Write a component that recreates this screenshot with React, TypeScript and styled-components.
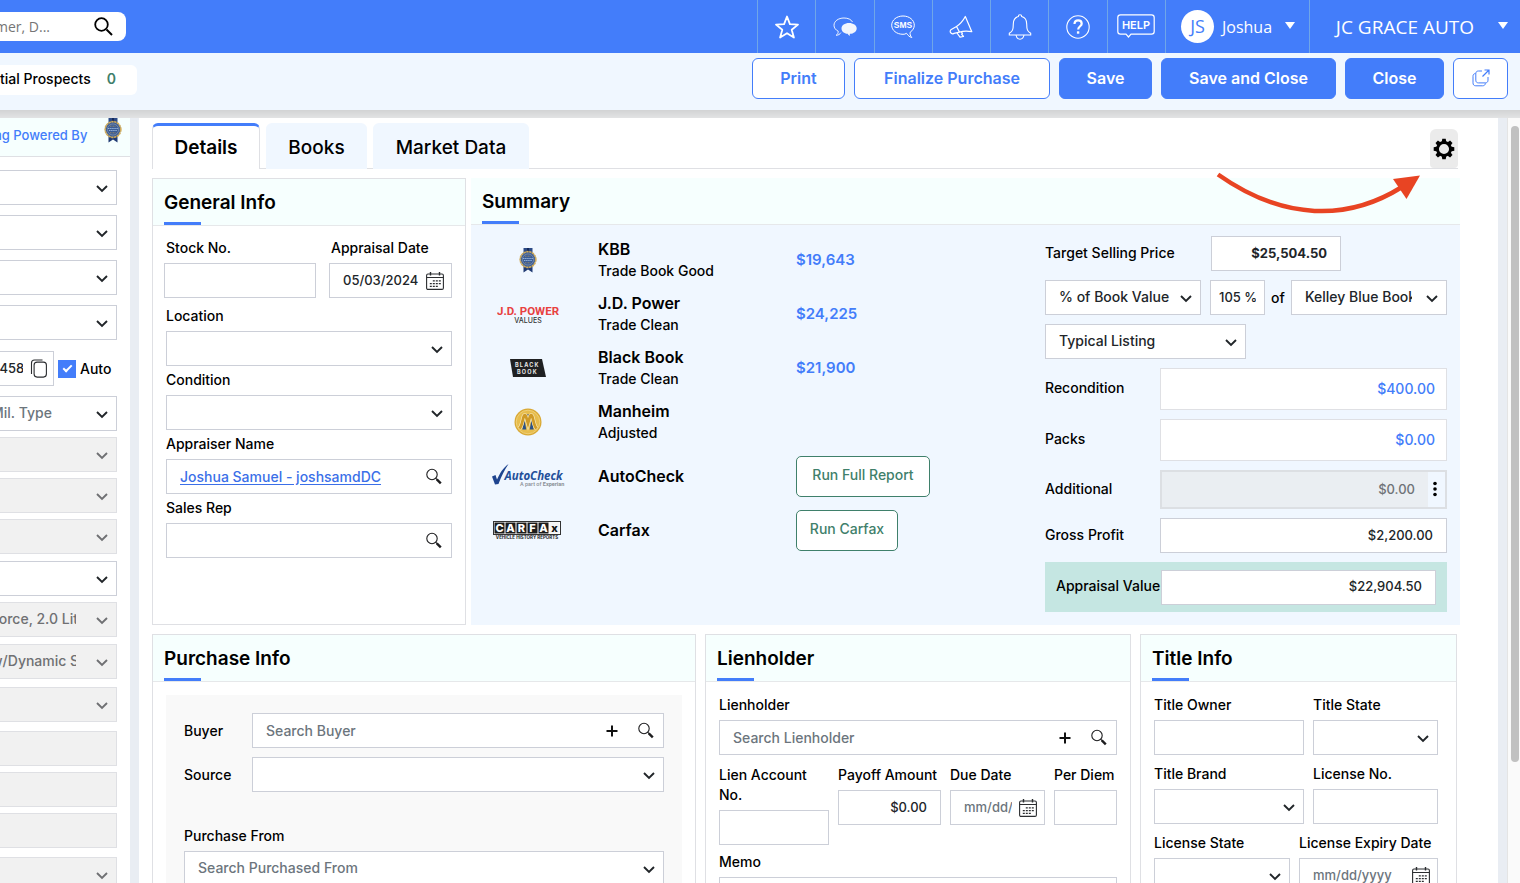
import React, { useId } from "react";
import styled, { createGlobalStyle, css } from "styled-components";

const c = {
  blue: "#437dfa",
  pale: "#f0f7ff",
  mint: "#f6fffe",
  line: "#dfe0e4",
  field: "#cccfd8",
  ink: "#212529",
  gutter: "#e9edf3",
  green: "#3f806b",
  muted: "#6c757d",
};

const ui = `Inter, "Liberation Sans", sans-serif`;
const nav = `"Open Sans", "Noto Sans", sans-serif`;

const GlobalStyle = createGlobalStyle`
  *, *::before, *::after { box-sizing: border-box; }
  body { margin: 0; background: ${c.gutter}; color: #000; font: 500 14px/20px ${ui}; }
  button, input, select { font: inherit; margin: 0; }
  svg { display: block; flex: none; }
`;

/* ---------- shell ---------- */

const Shell = styled.div`
  display: flex;
  flex-direction: column;
  height: 100vh;
  overflow: hidden;
`;

const TopBar = styled.header`
  display: flex;
  justify-content: space-between;
  align-items: center;
  height: 53px;
  flex: none;
  background: ${c.blue};
  color: #fff;
  font-family: ${nav};
  font-weight: 400;
`;

const SearchBox = styled.form`
  display: flex;
  align-items: center;
  width: 131px;
  height: 29px;
  margin-left: -5px;
  padding-right: 13px;
  background: #fff;
  border-radius: 0 8px 8px 0;
  overflow: hidden;
`;

const SearchInput = styled.input`
  flex: 1;
  min-width: 0;
  border: 0;
  padding: 0;
  background: none;
  font-size: 14px;
  &::placeholder { color: #757575; opacity: 1; }
`;

const BareButton = styled.button`
  display: flex;
  align-items: center;
  justify-content: center;
  border: 0;
  padding: 0;
  background: none;
  color: inherit;
  cursor: pointer;
`;

const TopRight = styled.nav`
  display: flex;
  height: 100%;
`;

const IconStrip = styled.div`
  display: grid;
  grid-template-columns: repeat(7, 1fr);
  width: 408px;
`;

const NavButton = styled(BareButton)`
  border-left: 1px solid #6fa6e8;
`;

const UserButton = styled(NavButton)`
  width: 144px;
  justify-content: space-between;
  padding: 0 14px 0 15px;
  font-size: 16px;
`;

const UserName = styled.span`
  display: flex;
  align-items: center;
  gap: 8px;
`;

const Avatar = styled.span`
  width: 33px;
  height: 33px;
  border-radius: 50%;
  background: #fff;
  color: ${c.blue};
  font-size: 18px;
  line-height: 33px;
`;

const DealerButton = styled(NavButton)`
  width: 211px;
  justify-content: flex-end;
  gap: 24px;
  padding-right: 12px;
  font-size: 19px;
`;

const Caret = styled.span`
  margin-bottom: 3px;
  border: 5px solid transparent;
  border-top: 7px solid #fff;
  border-bottom: 0;
`;

const ActionBar = styled.div`
  display: flex;
  justify-content: space-between;
  align-items: flex-start;
  height: 57px;
  flex: none;
  padding: 5px 12px 0 0;
  background: ${c.pale};
`;

const ProspectTab = styled.a`
  display: flex;
  align-items: center;
  gap: 16px;
  width: 137px;
  height: 30px;
  margin-top: 7px;
  padding-bottom: 2px;
  background: #fff;
  border-radius: 0 6px 6px 0;
  color: #000;
  white-space: nowrap;
  text-decoration: none;
`;

const ProspectCount = styled.span`
  color: ${c.green};
  font-weight: 600;
`;

const Actions = styled.div`
  display: flex;
  gap: 9px;
`;

const ActionButton = styled.button<{ $w: number; $solid?: boolean }>`
  display: flex;
  align-items: center;
  justify-content: center;
  width: ${(p) => p.$w}px;
  height: 41px;
  padding: 0 0 2px;
  border: 1px solid ${c.blue};
  border-radius: 6px;
  background: ${(p) => (p.$solid ? c.blue : "#fff")};
  color: ${(p) => (p.$solid ? "#fff" : c.blue)};
  font-size: 16px;
  font-weight: 600;
  white-space: nowrap;
  cursor: pointer;
`;

const BarShadow = styled.div`
  height: 8px;
  flex: none;
  background: linear-gradient(#d2d3d4, #e2e3e4);
`;

const Workspace = styled.div`
  display: flex;
  flex: 1;
  min-height: 0;
`;

/* ---------- form parts ---------- */

const Control = styled.span<{ $h?: number; $w?: number; $tone?: "off" | "soft" }>`
  display: flex;
  align-items: center;
  position: relative;
  width: ${(p) => (p.$w ? `${p.$w}px` : "100%")};
  height: ${(p) => p.$h ?? 35}px;
  flex: ${(p) => (p.$w ? "none" : "0 1 auto")};
  min-width: 0;
  border: 1px solid ${(p) => (p.$tone ? c.line : c.field)};
  background: ${(p) => (p.$tone === "off" ? "#f1f1f1" : "#fff")};
  color: ${(p) => (p.$tone === "off" ? "#6f7073" : c.ink)};
`;

const inner = css`
  flex: 1;
  min-width: 0;
  width: 100%;
  height: 100%;
  border: 0;
  border-radius: 0;
  background: none;
  color: inherit;
  outline-offset: -2px;
`;

const TextInput = styled.input<{ $pad?: string; $right?: boolean; $bold?: boolean; $small?: boolean }>`
  ${inner}
  padding: ${(p) => p.$pad ?? "0 13px"};
  padding-bottom: ${(p) => (p.$small ? 2 : 0)}px;
  text-align: ${(p) => (p.$right ? "right" : "left")};
  font-size: ${(p) => (p.$small ? 13 : 14)}px;
  font-weight: ${(p) => (p.$bold ? 700 : 500)};
  &::placeholder { color: ${c.muted}; opacity: 1; }
`;

const NativeSelect = styled.select<{ $pad?: string; $muted?: boolean }>`
  ${inner}
  appearance: none;
  opacity: 1;
  padding: ${(p) => p.$pad ?? "0 34px 2px 13px"};
  ${(p) => p.$muted && `color: ${c.muted};`}
  &:disabled { color: inherit; opacity: 1; }
`;

const SelectMark = styled.svg`
  position: absolute;
  right: 8px;
  top: calc(50% - 3px);
  pointer-events: none;
`;

const FieldBox = styled.div`
  display: flex;
  flex-direction: column;
  gap: 5px;
  min-width: 0;
`;

const Label = styled.label<{ $wrap?: boolean; $inset?: boolean }>`
  white-space: ${(p) => (p.$wrap ? "normal" : "nowrap")};
  padding-left: ${(p) => (p.$inset ? 2 : 0)}px;
`;

const IconSlot = styled(BareButton)`
  flex: none;
  width: 34px;
  height: 100%;
  color: #111;
`;

const CalendarSlot = styled(IconSlot)`
  width: 32px;
`;

const CopySlot = styled(IconSlot)`
  width: 30px;
`;

type SelectProps = {
  id?: string;
  label?: string;
  value?: string;
  w?: number;
  pad?: string;
  off?: boolean;
  muted?: boolean;
};

function Select({ id, label, value = "", w, pad, off, muted }: SelectProps) {
  return (
    <Control $w={w} $tone={off ? "off" : undefined}>
      <NativeSelect id={id} aria-label={label} disabled={off} $pad={pad} $muted={muted}>
        <option>{value}</option>
      </NativeSelect>
      <SelectMark width="12" height="8" viewBox="0 0 12 8" fill="none" stroke="currentColor" strokeWidth="1.9">
        <path d="M1 1l5 5 5-5" />
      </SelectMark>
    </Control>
  );
}

function Field({ label, wrap, inset, children }: {
  label: string; wrap?: boolean; inset?: boolean; children: (id: string) => React.ReactNode;
}) {
  const id = useId();
  return (
    <FieldBox>
      <Label htmlFor={id} $wrap={wrap} $inset={inset}>{label}</Label>
      {children(id)}
    </FieldBox>
  );
}

/* ---------- icons ---------- */

const Magnifier = () => (
  <svg width="18" height="18" viewBox="0 0 18 18" fill="none" stroke="#1d1d1f">
    <circle cx="7" cy="6.500" r="5.200" strokeWidth="1.100" />
    <path d="M10.600 10.100l2 2" strokeWidth="1.200" />
    <path d="M11.800 11.300l4 4" strokeWidth="2.400" />
  </svg>
);

const Plus = () => (
  <svg width="12" height="12" viewBox="0 0 12 12" stroke="#111" strokeWidth="2">
    <path d="M6 .5v11M.5 6h11" />
  </svg>
);

const Calendar = () => (
  <svg width="18" height="18" viewBox="0 0 18 18" fill="none" stroke="#2b2d30">
    <rect x=".6" y="2" width="16.800" height="15.400" rx="1.400" strokeWidth="1.100" />
    <path d="M.6 5.500h16.800" strokeWidth="1" />
    <path d="M4.500 0v3.400M13.500 0v3.400" strokeWidth="1.400" />
    <path d="M6.800 8.800h8M3.800 11.600h11M3.800 14.400h8" strokeWidth="1.300" strokeDasharray="2 1" />
  </svg>
);

const Gear = () => (
  <svg width="22" height="22" viewBox="-11 -11 22 22">
    <circle r="6.500" fill="none" stroke="#000" strokeWidth="2.900" />
    {[0, 45, 90, 135, 180, 225, 270, 315].map((a) => (
      <path key={a} d="M-2.400-6.600L-1.700-10.300H1.700L2.400-6.600z" transform={`rotate(${a})`} />
    ))}
  </svg>
);

const KbbBadge = () => (
  <svg width="18" height="25" viewBox="0 0 18 25">
    <path d="M4.500 0h9v6h-9z" fill="#2c4a86" />
    <path d="M8 0h2v5H8z" fill="#14295a" />
    <path d="M4.500 16h9v8.500L9 21.500l-4.500 3z" fill="#1f3a73" />
    <circle cx="9" cy="11.500" r="7.800" fill="#3a5c96" stroke="#d0ab58" strokeWidth="1.700" strokeDasharray="2.400 .5" />
    <circle cx="9" cy="11.500" r="5.600" fill="none" stroke="#93a3b5" strokeWidth=".6" />
    <path d="M4 10.500h10M5 12.500h8" stroke="#9cbbe2" strokeWidth=".9" strokeDasharray="1.500 .6" />
    <path d="M6 8.200h6M6 14.800h6" stroke="#b99b58" strokeWidth=".7" strokeDasharray="1 .5" />
  </svg>
);

const JdPowerLogo = () => (
  <svg width="62" height="22" viewBox="0 0 62 22">
    <text x="31" y="11.500" textAnchor="middle" fontFamily="Roboto, sans-serif" fontWeight="700" fontSize="11.500" fill="#e8413f">J.D. POWER</text>
    <text x="31" y="20" textAnchor="middle" fontFamily="Inter, sans-serif" fontWeight="500" fontSize="7" fill="#333">VALUES</text>
  </svg>
);

const BlackBookLogo = () => (
  <svg width="36" height="18" viewBox="0 0 36 18">
    <path d="M0 0h32l4 18H3z" fill="#1f2022" />
    <g fontFamily="Inter, sans-serif" fontWeight="700" fontSize="5.500" fill="#e9e9e9">
      <text x="5" y="8" letterSpacing="1.200">BLACK</text>
      <text x="7" y="14.500" letterSpacing="1.200">BOOK</text>
    </g>
  </svg>
);

const ManheimLogo = () => (
  <svg width="28" height="28" viewBox="0 0 28 28">
    <circle cx="14" cy="14" r="13.500" fill="#d9a935" />
    <circle cx="14" cy="14" r="11.800" fill="#e7bd4d" stroke="#f3d684" strokeWidth=".8" />
    <path d="M10.500 12l-2.200 9.500h4zM17.500 12l2.200 9.500h-4zM11.500 6.500h5L14 14z" fill="#2c5288" />
    <path d="M5.500 20.500C8 18 8.500 12 9.800 8.200c.5-1.300 1.600-1.300 2.100 0L14 15.500l2.100-7.300c.5-1.300 1.600-1.300 2.100 0C19.500 12 20 18 22.500 20.500" fill="none" stroke="#f8ecc4" strokeWidth="4" />
    <path d="M5.500 20.500C8 18 8.500 12 9.800 8.200c.5-1.300 1.600-1.300 2.100 0L14 15.500l2.100-7.300c.5-1.300 1.600-1.300 2.100 0C19.500 12 20 18 22.500 20.500" fill="none" stroke="#cf9a26" strokeWidth="2.800" />
  </svg>
);

const AutoCheckLogo = () => (
  <svg width="73" height="24" viewBox="0 0 73 24">
    <path d="M0 12.500l3.500-1.500 1.500 4.500C8 9 11 4 16.500 0 12.500 6 9.500 12 6.500 20L3 20.500z" fill="#1e448f" />
    <text x="12.500" y="15.500" fontFamily='"Open Sans", sans-serif' fontStyle="italic" fontWeight="700" fontSize="11.500" fill="#24509a">AutoCheck</text>
    <text x="28" y="22" fontFamily="Roboto, sans-serif" fontSize="5.500" fill="#8a9096">A part of <tspan fontWeight="700">Experian</tspan></text>
  </svg>
);

const CarfaxLogo = () => (
  <svg width="70" height="19" viewBox="0 0 70 19">
    <rect x=".5" y=".5" width="67" height="13" fill="#fff" stroke="#333" />
    {["C", "A", "R", "F", "A", "x"].map((l, i) => (
      <g key={i}>
        <rect x={1.5 + i * 11} y="1.500" width="10" height="11" fill={i < 5 ? "#1d1d1d" : "#f4f4f4"} />
        <text x={6.5 + i * 11} y="11" textAnchor="middle" fontFamily="Inter, sans-serif" fontWeight="800" fontSize="11" fill={i < 5 ? "#fff" : "#111"}>{l}</text>
      </g>
    ))}
    <text x="34" y="18" textAnchor="middle" fontFamily="Inter, sans-serif" fontWeight="700" fontSize="4.500" fill="#222">VEHICLE HISTORY REPORTS</text>
  </svg>
);

const StarIcon = () => (
  <svg width="26" height="26" viewBox="0 0 26 26" fill="none" stroke="#fff" strokeWidth="1.800" strokeLinejoin="round">
    <path d="M13 2.500l2.900 7.600 8.100.5-6.300 5.100 2.200 7.900L13 19.200l-6.900 4.400 2.200-7.900L2 10.600l8.100-.5z" />
  </svg>
);

const ChatIcon = () => (
  <svg width="24" height="20" viewBox="0 0 24 20" fill="none">
    <path d="M19.500 5C18.300 2.500 15 1 11 1 5.300 1 1 4.200 1 8.300c0 2.500 1.600 4.600 4.200 5.900.1 1.800-.6 3-2 4.100 2.200-.1 3.700-1 4.700-2.700" stroke="#fff" strokeWidth="1" opacity=".9" />
    <path d="M16 6c-4.200 0-7.500 2.400-7.500 5.400 0 2.900 2.700 5.100 6.200 5.400.4 1 1.200 1.700 2.400 2-.4-.7-.4-1.300-.2-2 3.900-.2 6.800-2.500 6.800-5.400C23.700 8.400 20.200 6 16 6z" fill="#f1f5fd" />
  </svg>
);

const SmsIcon = () => (
  <svg width="24" height="24" viewBox="0 0 24 24">
    <path d="M15.500 18.300c1.500 2.300 3.200 3.700 5.300 4.200-1.500-1.700-2-3.300-1.600-5.300C21.700 15.500 23.300 13 23.300 10.200 23.300 5 18.300 1 12 1S.7 5 .7 10.200s5 9.100 11.300 9.100c1.300 0 2.500-.2 3.500-1z" fill="none" stroke="#fff" strokeWidth="1" />
    <text x="12" y="13" textAnchor="middle" fontFamily='"Liberation Sans", sans-serif' fontWeight="700" fontSize="8.500" fill="#fff">SMS</text>
  </svg>
);

const HornIcon = () => (
  <svg width="24" height="24" viewBox="0 0 24 24" fill="none" stroke="#fff" strokeWidth="1.200" strokeLinejoin="round">
    <path d="M16.300 1.500l6.500 15.200c-4.400-.9-8.500-.8-12.300.4L7.500 11.500c3.800-2.500 6.600-5.800 8.800-10zM7.500 11.500l-4.800 2.800c-1.600.9-1.900 2.200-1.100 3.400.8 1.200 2 1.400 3.400.7l5.500-1.300M8 18l3 4.200 3.500-.7-1.900-2.300.8-.9-1-1.500" />
  </svg>
);

const BellIcon = () => (
  <svg width="24" height="28" viewBox="0 0 24 28" fill="none" stroke="#fff" strokeWidth="1.100">
    <path d="M10.300 3.500a1.700 1.700 0 1 1 3.400 0c3.500.9 5 4 5 7.500 0 6 .8 7.200 4 9.300v1.700H1.300v-1.700c3.200-2.100 4-3.300 4-9.300 0-3.500 1.500-6.600 5-7.500z" />
    <path d="M8 22c.5 2.700 2 4.200 4 4.200s3.500-1.500 4-4.200" />
  </svg>
);

const QuestionIcon = () => (
  <svg width="24" height="24" viewBox="0 0 24 24" fill="none" stroke="#fff">
    <circle cx="12" cy="12" r="11.200" strokeWidth="1.100" />
    <path d="M8.500 9c0-2.200 1.500-3.600 3.600-3.600s3.600 1.300 3.600 3.300c0 2.500-3.500 2.700-3.500 5.800" strokeWidth="2.200" />
    <path d="M12.100 16.300v2.400" strokeWidth="2.400" />
  </svg>
);

const HelpIcon = () => (
  <svg width="38" height="25" viewBox="0 0 38 25">
    <path d="M3.500.8h31c1.700 0 2.700 1 2.700 2.700v14c0 1.700-1 2.700-2.700 2.700H14L11.500 23 9 20.200H3.500C1.800 20.200.8 19.200.8 17.500v-14C.8 1.800 1.800.8 3.500.8z" fill="none" stroke="#fff" strokeWidth="1.200" />
    <text x="19" y="14.500" textAnchor="middle" fontFamily="Inter, sans-serif" fontWeight="600" fontSize="11" fill="#fff">HELP</text>
  </svg>
);

const PopOutIcon = () => (
  <svg width="18" height="18" viewBox="0 0 18 18" fill="none" stroke={c.blue} strokeWidth="1">
    <path d="M10 2H6.500C4.700 2 3.800 3 3.800 4.700v6.500c0 1.700 1 2.700 2.700 2.700h6.800c1.700 0 2.700-1 2.700-2.700V8" />
    <path d="M3.500 4.500C1.700 4.700 1 5.700 1 7.300v6.500c0 2 1 3 2.800 3h6.700c1.700 0 2.700-.8 2.900-2.500" />
    <path d="M10.500 7.500l6-6M12.500 1h4.500v4.500" strokeWidth="1.200" />
  </svg>
);

/* ---------- vehicle side panel ---------- */

const SidePanel = styled.aside`
  width: 130px;
  flex: none;
  background: #fff;
  overflow: hidden;
`;

/* The panel is scrolled slightly, so its content starts past the left edge. */
const SideScroll = styled.div`
  margin-left: -10px;
`;

const PoweredBy = styled.div`
  display: flex;
  justify-content: space-between;
  height: 39px;
  padding: 0 8px 0 4px;
  background: ${c.mint};
  border-bottom: 1px solid ${c.line};
  overflow: hidden;
`;

const PoweredLink = styled.a`
  color: ${c.blue};
  font-size: 13px;
  line-height: 34px;
  white-space: nowrap;
  text-decoration: none;
`;

const SideFields = styled.div`
  padding: 3px 13px 0 0;
`;

const SideRow = styled.div<{ $gap: number }>`
  display: flex;
  align-items: center;
  margin-top: ${(p) => p.$gap}px;
`;

const CheckLabel = styled.label`
  display: flex;
  align-items: center;
  gap: 4px;
  margin-left: 4px;
`;

const Check = styled.input`
  appearance: none;
  width: 18px;
  height: 18px;
  flex: none;
  margin: 0;
  background: ${c.blue};
  display: grid;
  place-items: center;
  &::after {
    content: "";
    width: 9px;
    height: 5px;
    margin-top: -2px;
    border: solid #fff;
    border-width: 0 0 2px 2px;
    transform: rotate(-45deg);
  }
`;

const sideRows: { gap: number; off?: boolean; value?: string; plain?: boolean; name: string; muted?: boolean }[] = [
  { gap: 10, value: "Mil. Type", muted: true, name: "Mileage type" },
  { gap: 6, off: true, name: "Exterior color" },
  { gap: 6, off: true, name: "Interior color" },
  { gap: 6, off: true, name: "Body" },
  { gap: 7, name: "Trim" },
  { gap: 6, off: true, value: "Force, 2.0 Lit", name: "Engine" },
  { gap: 7, off: true, value: "w/Dynamic Shift", name: "Transmission" },
  { gap: 8, off: true, name: "Drivetrain" },
  { gap: 9, off: true, plain: true, name: "Doors" },
  { gap: 6, off: true, plain: true, name: "Weight" },
  { gap: 6, off: true, plain: true, name: "Class" },
  { gap: 9, off: true, name: "Fuel" },
];

function VehiclePanel() {
  return (
    <SidePanel>
      <SideScroll>
        <PoweredBy>
          <PoweredLink href="#kbb">ng Powered By</PoweredLink>
          <KbbBadge />
        </PoweredBy>
        <SideFields>
          {["Year", "Make", "Model", "Series"].map((n) => (
            <SideRow key={n} $gap={10}><Select label={n} /></SideRow>
          ))}
          <SideRow $gap={11}>
            <Control $w={64}>
              <TextInput aria-label="Mileage" defaultValue="04588" $pad="0" $small />
              <CopySlot type="button" aria-label="Copy mileage">
                <svg width="17" height="19" viewBox="0 0 17 19" fill="none" stroke="#2b2d30" strokeWidth="1.100">
                  <rect x="4.100" y="3.100" width="12.300" height="15" rx="3" />
                  <path d="M1.500 15V4c0-2 1-3 3-3h8" />
                </svg>
              </CopySlot>
            </Control>
            <CheckLabel><Check type="checkbox" defaultChecked />Auto</CheckLabel>
          </SideRow>
          {sideRows.map((r) => (
            <SideRow key={r.name} $gap={r.gap}>
              {r.plain ? (
                <Control $tone="off"><TextInput aria-label={r.name} disabled /></Control>
              ) : (
                <Select label={r.name} value={r.value} off={r.off} muted={r.muted} pad="0 40px 2px 0" />
              )}
            </SideRow>
          ))}
        </SideFields>
      </SideScroll>
    </SidePanel>
  );
}

/* ---------- main area ---------- */

const Main = styled.main`
  position: relative;
  flex: 1;
  min-width: 0;
  margin: 0 9px;
  padding: 5px 38px 0 13px;
  background: #fff;
  overflow: hidden;
`;

const TabBar = styled.div`
  display: flex;
  align-items: flex-end;
  height: 46px;
  margin-right: 2px;
  box-shadow: inset 0 -1px ${c.line};
`;

const Tab = styled.button<{ $active?: boolean; $w: number }>`
  width: ${(p) => p.$w}px;
  height: 46px;
  margin-right: 6px;
  padding: 0;
  border: solid ${(p) => (p.$active ? c.line : c.pale)};
  border-width: ${(p) => (p.$active ? "3px 1px 0" : "3px 0 0")};
  border-top-color: ${(p) => (p.$active ? c.blue : c.pale)};
  border-radius: 6px 6px 0 0;
  background: ${(p) => (p.$active ? "#fff" : c.pale)};
  color: #000;
  font-size: 19px;
  font-weight: ${(p) => (p.$active ? 600 : 500)};
  cursor: pointer;
`;

const GearButton = styled(BareButton)`
  width: 28px;
  height: 39px;
  margin: 0 0 1px auto;
  border-radius: 6px 6px 4px 4px;
  background: #ebebeb;
`;

const PointerArrow = styled.svg`
  position: absolute;
  top: 53px;
  right: 76px;
  pointer-events: none;
`;

const UpperRow = styled.div`
  display: grid;
  grid-template-columns: 314px 1fr;
  gap: 5px;
  height: 447px;
  margin-top: 9px;
`;

const LowerRow = styled.div`
  display: grid;
  grid-template-columns: 544fr 426fr 317fr;
  gap: 9px;
  height: 400px;
  margin: 9px 3px 0 0;
`;

const Card = styled.section<{ $tinted?: boolean }>`
  min-width: 0;
  border: ${(p) => (p.$tinted ? "0" : `1px solid ${c.line}`)};
  background: ${(p) => (p.$tinted ? c.pale : "#fff")};
`;

const CardHead = styled.div`
  display: flex;
  height: 47px;
  padding-left: 11px;
  background: ${c.mint};
  border-bottom: 1px solid #e6e8ea;
`;

const CardTitle = styled.h2`
  position: relative;
  margin: 0;
  font-size: 19px;
  font-weight: 600;
  line-height: 47px;
  white-space: nowrap;
  &::after {
    content: "";
    position: absolute;
    left: 0;
    bottom: 0;
    width: 37px;
    height: 3px;
    background: ${c.blue};
  }
`;

const GeneralBody = styled.div`
  padding: 12px 13px 0 11px;
`;

const DateRow = styled.div`
  display: grid;
  grid-template-columns: 152px 1fr;
  gap: 13px;
  margin-bottom: 8px;
`;

const Stack = styled.div`
  display: flex;
  flex-direction: column;
  gap: 4px;
  padding-left: 2px;
`;

const PersonLink = styled.a`
  flex: 1;
  padding-left: 13px;
  color: #3b6fe8;
  text-underline-offset: 2px;
  white-space: nowrap;
`;

const SummaryBody = styled.div`
  display: flex;
  justify-content: space-between;
  align-items: flex-start;
  padding: 8px 13px 0 0;
`;

const SourceTable = styled.table`
  border-collapse: collapse;
  td { padding: 0; height: 54px; vertical-align: middle; }
`;

const LogoCell = styled.td`
  width: 114px;
  svg { margin: 0 auto; }
`;

const NameCell = styled.td`
  width: 211px;
  && { padding-left: 13px; }
`;

const SourceName = styled.div`
  font-size: 16px;
  font-weight: 600;
  line-height: 22px;
`;

const SourceNote = styled.div`
  line-height: 22px;
`;

const Amount = styled.span`
  color: ${c.blue};
  font-size: 15px;
  font-weight: 600;
`;

const ReportButton = styled.button<{ $w: number }>`
  display: block;
  width: ${(p) => p.$w}px;
  height: 41px;
  padding: 0 0 2px;
  border: 1px solid ${c.green};
  border-radius: 5px;
  background: #fff;
  color: ${c.green};
  white-space: nowrap;
  cursor: pointer;
`;

const PriceForm = styled.form`
  display: flex;
  flex-direction: column;
  gap: 9px;
  width: 402px;
  padding-top: 3px;
`;

const PriceRow = styled.div`
  display: flex;
  align-items: center;
`;

const PriceLabel = styled.label<{ $w?: number }>`
  width: ${(p) => p.$w ?? 115}px;
  flex: none;
  padding-bottom: 2px;
  white-space: nowrap;
`;

const BasisRow = styled.div`
  display: flex;
  justify-content: space-between;
  align-items: center;
`;

const BasisPair = styled.div`
  display: flex;
  gap: 9px;
`;

const LinkAmount = styled(TextInput)`
  padding-bottom: 2px;
  color: ${c.blue};
`;

const AdditionalBox = styled(Control)`
  border: 2px solid #dcdfe3;
  background: #eaeef2;
  color: #6f7377;
`;

const DotsButton = styled(BareButton)`
  width: 17px;
  height: 100%;
  padding: 0 3px 2px 0;
  background: ${c.pale};
`;

const ValueRow = styled(PriceRow)`
  height: 50px;
  padding: 0 11px;
  background: #c5e6e2;
`;

const ValueLabel = styled(PriceLabel)`
  width: 105px;
`;

const PurchaseBody = styled.div`
  margin: 13px 13px 0;
  padding: 18px;
  height: 330px;
  background: #f9f9f9;
`;

const SideLabelGrid = styled.div`
  display: grid;
  grid-template-columns: 68px 1fr;
  align-items: center;
  gap: 9px 0;
  margin-bottom: 34px;
`;

const LienBody = styled.div`
  display: flex;
  flex-direction: column;
  padding: 13px;
`;

const LienGrid = styled.div`
  display: grid;
  grid-template-columns: 110fr 103fr 95fr 63fr;
  align-items: start;
  gap: 9px;
  margin: 10px 0 7px;
`;

const TitleBody = styled.div`
  display: flex;
  flex-direction: column;
  gap: 9px;
  padding: 13px 18px 0 13px;
`;

const Pair = styled.div<{ $cols: string }>`
  display: grid;
  grid-template-columns: ${(p) => p.$cols};
  gap: 9px;
`;

const sources: { logo: React.ReactNode; name: string; note?: string; amount?: string; report?: string; w?: number }[] = [
  { logo: <KbbBadge />, name: "KBB", note: "Trade Book Good", amount: "$19,643" },
  { logo: <JdPowerLogo />, name: "J.D. Power", note: "Trade Clean", amount: "$24,225" },
  { logo: <BlackBookLogo />, name: "Black Book", note: "Trade Clean", amount: "$21,900" },
  { logo: <ManheimLogo />, name: "Manheim", note: "Adjusted" },
  { logo: <AutoCheckLogo />, name: "AutoCheck", report: "Run Full Report", w: 134 },
  { logo: <CarfaxLogo />, name: "Carfax", report: "Run Carfax", w: 102 },
];

function SearchControl({ id, placeholder }: { id: string; placeholder: string }) {
  return (
    <Control>
      <TextInput id={id} placeholder={placeholder} />
      <IconSlot type="button" aria-label="Add"><Plus /></IconSlot>
      <IconSlot type="button" aria-label="Search"><Magnifier /></IconSlot>
    </Control>
  );
}

function DateControl({ id, value, placeholder }: { id: string; value?: string; placeholder?: string }) {
  return (
    <Control>
      <TextInput id={id} defaultValue={value} placeholder={placeholder} $pad="0 0 0 13px" $small />
      <CalendarSlot type="button" aria-label="Choose date"><Calendar /></CalendarSlot>
    </Control>
  );
}

function GeneralInfo() {
  return (
    <Card>
      <CardHead><CardTitle>General Info</CardTitle></CardHead>
      <GeneralBody>
        <DateRow>
          <Field label="Stock No." inset>{(id) => <Control><TextInput id={id} /></Control>}</Field>
          <Field label="Appraisal Date" inset>{(id) => <DateControl id={id} value="05/03/2024" />}</Field>
        </DateRow>
        <Stack>
          <Field label="Location">{(id) => <Select id={id} />}</Field>
          <Field label="Condition">{(id) => <Select id={id} />}</Field>
          <FieldBox>
            <span>Appraiser Name</span>
            <Control>
              <PersonLink href="#appraiser">Joshua Samuel - joshsamdDC</PersonLink>
              <IconSlot type="button" aria-label="Search appraiser"><Magnifier /></IconSlot>
            </Control>
          </FieldBox>
          <Field label="Sales Rep">
            {(id) => (
              <Control>
                <TextInput id={id} />
                <IconSlot type="button" aria-label="Search sales rep"><Magnifier /></IconSlot>
              </Control>
            )}
          </Field>
        </Stack>
      </GeneralBody>
    </Card>
  );
}

function Summary() {
  return (
    <Card $tinted>
      <CardHead><CardTitle>Summary</CardTitle></CardHead>
      <SummaryBody>
        <SourceTable>
          <tbody>
            {sources.map((s) => (
              <tr key={s.name}>
                <LogoCell>{s.logo}</LogoCell>
                <NameCell>
                  <SourceName>{s.name}</SourceName>
                  {s.note && <SourceNote>{s.note}</SourceNote>}
                </NameCell>
                <td>
                  {s.amount && <Amount>{s.amount}</Amount>}
                  {s.report && <ReportButton type="button" $w={s.w!}>{s.report}</ReportButton>}
                </td>
              </tr>
            ))}
          </tbody>
        </SourceTable>
        <PriceForm>
          <PriceRow>
            <PriceLabel htmlFor="target" $w={166}>Target Selling Price</PriceLabel>
            <Control $w={130}><TextInput id="target" defaultValue="$25,504.50" $right $bold $small /></Control>
          </PriceRow>
          <BasisRow>
            <BasisPair>
              <Select label="Pricing basis" value="% of Book Value" w={156} pad="0 30px 2px 13px" />
              <Control $w={55}><TextInput aria-label="Percent" defaultValue="105 %" $pad="0 8px" $small /></Control>
            </BasisPair>
            <span>of</span>
            <Select label="Book" value="Kelley Blue Book" w={156} />
          </BasisRow>
          <Select label="Listing type" value="Typical Listing" w={201} />
          <PriceRow>
            <PriceLabel htmlFor="recon">Recondition</PriceLabel>
            <Control $h={42} $tone="soft"><LinkAmount id="recon" defaultValue="$400.00" $right $pad="0 11px" /></Control>
          </PriceRow>
          <PriceRow>
            <PriceLabel htmlFor="packs">Packs</PriceLabel>
            <Control $h={42} $tone="soft"><LinkAmount id="packs" defaultValue="$0.00" $right $pad="0 11px" /></Control>
          </PriceRow>
          <PriceRow>
            <PriceLabel htmlFor="additional">Additional</PriceLabel>
            <AdditionalBox $h={39}>
              <TextInput id="additional" defaultValue="$0.00" readOnly $right $small />
              <DotsButton type="button" aria-label="More charges">
                <svg width="4" height="16" viewBox="0 0 4 16">
                  <circle cx="2" cy="2.500" r="1.800" /><circle cx="2" cy="8" r="1.800" /><circle cx="2" cy="13.500" r="1.800" />
                </svg>
              </DotsButton>
            </AdditionalBox>
          </PriceRow>
          <PriceRow>
            <PriceLabel htmlFor="gross">Gross Profit</PriceLabel>
            <Control><TextInput id="gross" defaultValue="$2,200.00" $right $small /></Control>
          </PriceRow>
          <ValueRow>
            <ValueLabel htmlFor="value">Appraisal Value</ValueLabel>
            <Control><TextInput id="value" defaultValue="$22,904.50" $right $small /></Control>
          </ValueRow>
        </PriceForm>
      </SummaryBody>
    </Card>
  );
}

function PurchaseInfo() {
  return (
    <Card>
      <CardHead><CardTitle>Purchase Info</CardTitle></CardHead>
      <PurchaseBody>
        <SideLabelGrid>
          <Label htmlFor="buyer">Buyer</Label>
          <SearchControl id="buyer" placeholder="Search Buyer" />
          <Label htmlFor="source">Source</Label>
          <Select id="source" />
        </SideLabelGrid>
        <Field label="Purchase From">{(id) => <Select id={id} value="Search Purchased From" muted />}</Field>
      </PurchaseBody>
    </Card>
  );
}

function Lienholder() {
  return (
    <Card>
      <CardHead><CardTitle>Lienholder</CardTitle></CardHead>
      <LienBody>
        <Field label="Lienholder">{(id) => <SearchControl id={id} placeholder="Search Lienholder" />}</Field>
        <LienGrid>
          <Field label="Lien Account No." wrap>{(id) => <Control><TextInput id={id} /></Control>}</Field>
          <Field label="Payoff Amount">{(id) => <Control><TextInput id={id} defaultValue="$0.00" $right $small /></Control>}</Field>
          <Field label="Due Date">{(id) => <DateControl id={id} placeholder="mm/dd/yyyy" />}</Field>
          <Field label="Per Diem">{(id) => <Control><TextInput id={id} /></Control>}</Field>
        </LienGrid>
        <Field label="Memo">{(id) => <Control><TextInput id={id} /></Control>}</Field>
      </LienBody>
    </Card>
  );
}

function TitleInfo() {
  return (
    <Card>
      <CardHead><CardTitle>Title Info</CardTitle></CardHead>
      <TitleBody>
        <Pair $cols="150fr 125fr">
          <Field label="Title Owner">{(id) => <Control><TextInput id={id} /></Control>}</Field>
          <Field label="Title State">{(id) => <Select id={id} />}</Field>
        </Pair>
        <Pair $cols="150fr 125fr">
          <Field label="Title Brand">{(id) => <Select id={id} />}</Field>
          <Field label="License No.">{(id) => <Control><TextInput id={id} /></Control>}</Field>
        </Pair>
        <Pair $cols="136fr 139fr">
          <Field label="License State">{(id) => <Select id={id} />}</Field>
          <Field label="License Expiry Date">{(id) => <DateControl id={id} placeholder="mm/dd/yyyy" />}</Field>
        </Pair>
      </TitleBody>
    </Card>
  );
}

const ScrollTrack = styled.div`
  width: 13px;
  flex: none;
  padding: 8px 1px 0 3px;
  background: #fafafa;
  border-left: 1px solid #e4e4e4;
`;

const ScrollThumb = styled.div`
  height: 84%;
  border-radius: 4px;
  background: #c1c1c1;
`;

const navIcons: [string, () => React.JSX.Element][] = [
  ["Favorites", StarIcon],
  ["Chat", ChatIcon],
  ["Text messages", SmsIcon],
  ["Announcements", HornIcon],
  ["Notifications", BellIcon],
  ["Questions", QuestionIcon],
  ["Help", HelpIcon],
];

export default function App() {
  return (
    <Shell>
      <GlobalStyle />
      <TopBar>
        <SearchBox>
          <SearchInput aria-label="Search" placeholder="mer, D..." />
          <BareButton type="button" aria-label="Search">
            <svg width="19" height="19" viewBox="0 0 19 19" fill="none" stroke="#000">
              <circle cx="7.500" cy="7.500" r="6.300" strokeWidth="1.800" />
              <path d="M12.500 12.500l5.500 5.500" strokeWidth="2" />
            </svg>
          </BareButton>
        </SearchBox>
        <TopRight>
          <IconStrip>
            {navIcons.map(([name, Icon]) => (
              <NavButton key={name} type="button" aria-label={name}><Icon /></NavButton>
            ))}
          </IconStrip>
          <UserButton type="button"><UserName><Avatar>JS</Avatar>Joshua</UserName><Caret /></UserButton>
          <DealerButton type="button">JC GRACE AUTO<Caret /></DealerButton>
        </TopRight>
      </TopBar>
      <ActionBar>
        <ProspectTab href="#prospects">tial Prospects<ProspectCount>0</ProspectCount></ProspectTab>
        <Actions>
          <ActionButton $w={93}>Print</ActionButton>
          <ActionButton $w={196}>Finalize Purchase</ActionButton>
          <ActionButton $w={93} $solid>Save</ActionButton>
          <ActionButton $w={175} $solid>Save and Close</ActionButton>
          <ActionButton $w={99} $solid>Close</ActionButton>
          <ActionButton $w={55} aria-label="Open in new window"><PopOutIcon /></ActionButton>
        </Actions>
      </ActionBar>
      <BarShadow />
      <Workspace>
        <VehiclePanel />
        <Main>
          <TabBar role="tablist">
            <Tab role="tab" aria-selected $active $w={108}>Details</Tab>
            <Tab role="tab" $w={101}>Books</Tab>
            <Tab role="tab" $w={156}>Market Data</Tab>
            <GearButton type="button" aria-label="Settings"><Gear /></GearButton>
          </TabBar>
          <UpperRow>
            <GeneralInfo />
            <Summary />
          </UpperRow>
          <LowerRow>
            <PurchaseInfo />
            <Lienholder />
            <TitleInfo />
          </LowerRow>
          <PointerArrow width="206" height="46" viewBox="0 0 206 46">
            <path d="M2 3.500C68 50 132 50 186 16" fill="none" stroke="#e84423" strokeWidth="4.500" />
            <path d="M204 4.500l-27 3.500 13.500 20z" fill="#e84423" />
          </PointerArrow>
        </Main>
        <ScrollTrack><ScrollThumb /></ScrollTrack>
      </Workspace>
    </Shell>
  );
}
